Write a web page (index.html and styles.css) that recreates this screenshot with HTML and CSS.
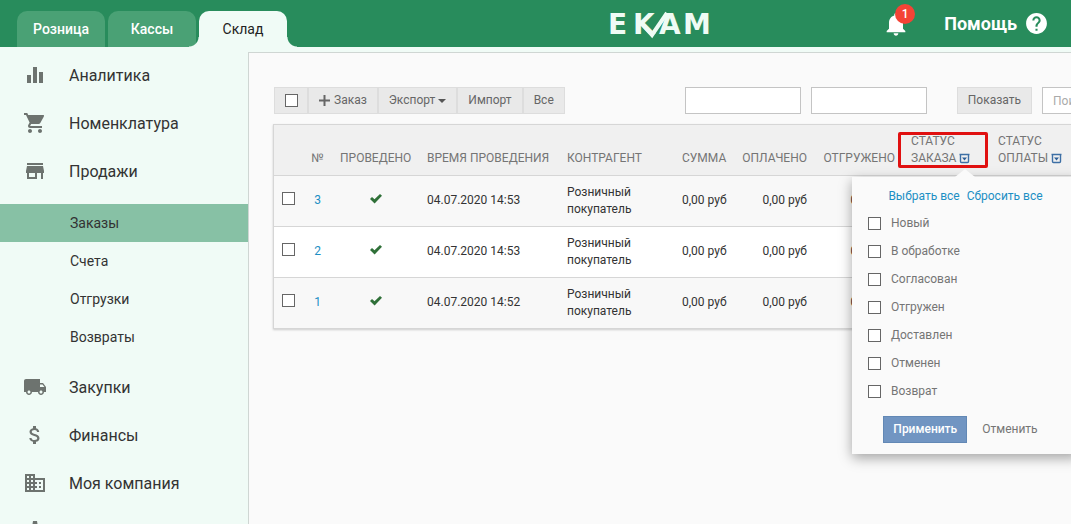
FILE: index.html
```html
<!DOCTYPE html>
<html lang="ru">
<head>
<meta charset="utf-8">
<meta name="viewport" content="width=device-width, initial-scale=1">
<title>ЕКАМ</title>
<link rel="stylesheet" href="styles.css">
</head>
<body>
<header class="topbar">
  <nav class="tabs">
    <a class="tab" href="#">Розница</a>
    <a class="tab" href="#">Кассы</a>
    <a class="tab tab-active" href="#">Склад</a>
  </nav>
  <svg class="logo" width="104" height="38" viewBox="0 0 104 38">
    <text class="logo-text" x="0 25 51 75" y="29">EKAM</text>
    <path d="M35 20 44 30 59 8" fill="none" stroke="#effbf5" stroke-width="4"/>
  </svg>
  <div class="topbar-right">
    <button class="bell" type="button" aria-label="1">
      <svg width="28" height="28" viewBox="0 0 24 24" fill="#fff"><path d="M12 22c1.1 0 2-.9 2-2h-4c0 1.1.89 2 2 2zm6-6v-5c0-3.07-1.64-5.64-4.5-6.32V4c0-.83-.67-1.5-1.5-1.5s-1.5.67-1.5 1.5v.68C7.63 5.36 6 7.92 6 11v5l-2 2v1h16v-1l-2-2z"/></svg>
      <span class="badge">1</span>
    </button>
    <a class="help" href="#">Помощь
      <svg width="25" height="25" viewBox="0 0 24 24" fill="#fff"><path d="M12 2C6.48 2 2 6.48 2 12s4.480 10 10 10 10-4.480 10-10S17.520 2 12 2zm1 17h-2v-2h2v2zm2.070-7.750l-.9.920C13.450 12.900 13 13.500 13 15h-2v-.5c0-1.100.450-2.100 1.170-2.830l1.240-1.260c.370-.360.590-.860.590-1.410 0-1.100-.9-2-2-2s-2 .9-2 2H8c0-2.210 1.790-4 4-4s4 1.790 4 4c0 .880-.360 1.680-.930 2.250z"/></svg>
    </a>
  </div>
</header>
<div class="body">
  <nav class="sidebar">
    <a class="item" href="#"><svg class="icon" viewBox="0 0 24 24"><path d="M4 12h4v8H4zM10 4h4v16h-4zM16 9h4v11h-4z"/></svg>Аналитика</a>
    <a class="item" href="#"><svg class="icon" viewBox="0 0 24 24"><path d="M7 18c-1.100 0-1.990.9-1.990 2S5.900 22 7 22s2-.9 2-2-.9-2-2-2zM1 2v2h2l3.600 7.590-1.350 2.450c-.160.280-.250.610-.250.960 0 1.100.9 2 2 2h12v-2H7.420c-.140 0-.250-.110-.250-.250l.030-.120.9-1.630h7.450c.750 0 1.410-.410 1.750-1.030l3.580-6.490A1 1 0 0 0 20 4H5.210l-.940-2H1zm16 16c-1.100 0-1.990.9-1.990 2s.890 2 1.990 2 2-.9 2-2-.9-2-2-2z"/></svg>Номенклатура</a>
    <a class="item" href="#"><svg class="icon" viewBox="0 0 24 24"><path d="M20 4H4v2h16V4zm1 10v-2l-1-5H4l-1 5v2h1v6h10v-6h4v6h2v-6h1zm-9 4H6v-4h6v4z"/></svg>Продажи</a>
    <div class="submenu">
      <a class="subitem subitem-active" href="#">Заказы</a>
      <a class="subitem" href="#">Счета</a>
      <a class="subitem" href="#">Отгрузки</a>
      <a class="subitem" href="#">Возвраты</a>
    </div>
    <a class="item" href="#"><svg class="icon" viewBox="0 0 24 24"><path d="M20 8h-3V4H3c-1.100 0-2 .9-2 2v11h2c0 1.660 1.340 3 3 3s3-1.340 3-3h6c0 1.660 1.340 3 3 3s3-1.340 3-3h2v-5l-3-4zM6 18.500c-.830 0-1.500-.670-1.500-1.500s.670-1.500 1.500-1.500 1.500.670 1.500 1.500-.670 1.500-1.500 1.500zm13.500-9l1.960 2.500H17V9.500h2.500zm-1.500 9c-.830 0-1.500-.670-1.500-1.500s.670-1.500 1.500-1.500 1.500.670 1.500 1.500-.670 1.500-1.500 1.500z"/></svg>Закупки</a>
    <a class="item" href="#"><svg class="icon" viewBox="0 0 24 24"><path d="M11.800 10.900c-2.270-.590-3-1.200-3-2.150 0-1.090 1.010-1.850 2.700-1.850 1.780 0 2.440.850 2.500 2.100h2.210c-.070-1.720-1.120-3.300-3.210-3.810V3h-3v2.160c-1.940.420-3.500 1.680-3.500 3.610 0 2.310 1.910 3.460 4.700 4.130 2.500.6 3 1.480 3 2.410 0 .690-.490 1.790-2.700 1.790-2.060 0-2.870-.920-2.980-2.100h-2.200c.120 2.190 1.760 3.420 3.680 3.830V21h3v-2.150c1.950-.370 3.500-1.500 3.500-3.550 0-2.840-2.430-3.810-4.700-4.400z"/></svg>Финансы</a>
    <a class="item" href="#"><svg class="icon" viewBox="0 0 24 24"><path d="M12 7V3H2v18h20V7H12zM6 19H4v-2h2v2zm0-4H4v-2h2v2zm0-4H4V9h2v2zm0-4H4V5h2v2zm4 12H8v-2h2v2zm0-4H8v-2h2v2zm0-4H8V9h2v2zm0-4H8V5h2v2zm10 12h-8v-2h2v-2h-2v-2h2v-2h-2V9h8v10zm-2-8h-2v2h2v-2zm0 4h-2v2h2v-2z"/></svg>Моя компания</a>
    <a class="item" href="#"><svg class="icon" viewBox="0 0 24 24"><path d="M10 2h4l.5 3 2 1 3-1 2 3.500-2.500 2v3l2.500 2-2 3.500-3-1-2 1-.5 3h-4l-.5-3-2-1-3 1-2-3.500 2.500-2v-3l-2.500-2 2-3.500 3 1 2-1zM12 8.500a3.500 3.500 0 1 0 0 7 3.500 3.500 0 0 0 0-7z"/></svg></a>
  </nav>
  <main class="main">
    <div class="toolbar">
      <div class="group">
        <label class="btn btn-check"><input class="check" type="checkbox" aria-label="Все"></label>
        <button class="btn" type="button"><svg class="plus" width="11" height="11" viewBox="0 0 11 11"><path d="M5.500 0v11M0 5.500h11" stroke="#666" stroke-width="2"/></svg>Заказ</button>
        <button class="btn" type="button">Экспорт<span class="caret"></span></button>
        <button class="btn" type="button">Импорт</button>
        <button class="btn" type="button">Все</button>
      </div>
      <div class="filters">
        <input class="field" type="text" aria-label="С">
        <input class="field" type="text" aria-label="По">
        <button class="btn btn-show" type="button">Показать</button>
        <input class="field field-search" type="text" placeholder="Поиск" aria-label="Поиск">
      </div>
    </div>
    <table class="orders">
      <colgroup>
        <col class="c-check"><col class="c-num"><col class="c-done"><col class="c-time"><col class="c-agent"><col class="c-sum"><col class="c-paid"><col class="c-shipped"><col class="c-status"><col>
      </colgroup>
      <thead>
        <tr>
          <th></th><th class="center">№</th><th class="center">ПРОВЕДЕНО</th><th>ВРЕМЯ ПРОВЕДЕНИЯ</th><th>КОНТРАГЕНТ</th>
          <th class="right">СУММА</th><th class="right">ОПЛАЧЕНО</th><th class="right">ОТГРУЖЕНО</th>
          <th class="status">СТАТУС<br>ЗАКАЗА <svg class="drop" width="11" height="11" viewBox="0 0 11 11"><path d="M1.500 2v6.500q0 1 1 1h6q1 0 1-1V2M.5 1.500h10" fill="none" stroke="#3d6fa5" stroke-width="1.400"/><path d="M3 4.500h5L5.500 7.500z" fill="#2c5f98"/></svg>
            <div class="highlight"></div>
            <form class="popup">
              <div class="popup-links"><a href="#">Выбрать все</a><a href="#">Сбросить все</a></div>
              <label class="option"><input class="check" type="checkbox">Новый</label>
              <label class="option"><input class="check" type="checkbox">В обработке</label>
              <label class="option"><input class="check" type="checkbox">Согласован</label>
              <label class="option"><input class="check" type="checkbox">Отгружен</label>
              <label class="option"><input class="check" type="checkbox">Доставлен</label>
              <label class="option"><input class="check" type="checkbox">Отменен</label>
              <label class="option"><input class="check" type="checkbox">Возврат</label>
              <div class="popup-actions"><button class="apply" type="button">Применить</button><button class="cancel" type="button">Отменить</button></div>
            </form>
          </th>
          <th>СТАТУС<br>ОПЛАТЫ <svg class="drop" width="11" height="11" viewBox="0 0 11 11"><path d="M1.500 2v6.500q0 1 1 1h6q1 0 1-1V2M.5 1.500h10" fill="none" stroke="#3d6fa5" stroke-width="1.400"/><path d="M3 4.500h5L5.500 7.500z" fill="#2c5f98"/></svg></th>
        </tr>
      </thead>
      <tbody>
        <tr>
          <td class="cell-check"><input class="check" type="checkbox" aria-label="3"></td><td class="center"><a href="#">3</a></td>
          <td class="center"><svg class="tick" width="12" height="10" viewBox="0 0 12 10"><path d="M0 5l2-2 2.500 2.200L10 0l2 1.800L4.600 9.600z"/></svg></td>
          <td>04.07.2020 14:53</td><td class="agent">Розничный покупатель</td><td class="right">0,00 руб</td><td class="right">0,00 руб</td><td class="right">0,00 руб</td><td></td><td></td>
        </tr>
        <tr>
          <td class="cell-check"><input class="check" type="checkbox" aria-label="2"></td><td class="center"><a href="#">2</a></td>
          <td class="center"><svg class="tick" width="12" height="10" viewBox="0 0 12 10"><path d="M0 5l2-2 2.500 2.200L10 0l2 1.800L4.600 9.600z"/></svg></td>
          <td>04.07.2020 14:53</td><td class="agent">Розничный покупатель</td><td class="right">0,00 руб</td><td class="right">0,00 руб</td><td class="right">0,00 руб</td><td></td><td></td>
        </tr>
        <tr>
          <td class="cell-check"><input class="check" type="checkbox" aria-label="1"></td><td class="center"><a href="#">1</a></td>
          <td class="center"><svg class="tick" width="12" height="10" viewBox="0 0 12 10"><path d="M0 5l2-2 2.500 2.200L10 0l2 1.800L4.600 9.600z"/></svg></td>
          <td>04.07.2020 14:52</td><td class="agent">Розничный покупатель</td><td class="right">0,00 руб</td><td class="right">0,00 руб</td><td class="right">0,00 руб</td><td></td><td></td>
        </tr>
      </tbody>
    </table>
  </main>
</div>
</body>
</html>
```

FILE: styles.css
```css
* { box-sizing: border-box; }
body {
  margin: 0;
  height: 100vh;
  overflow: hidden;
  display: flex;
  flex-direction: column;
  background: #f0fbf6;
  color: #333;
  font: 12px/17px Roboto, "Liberation Sans", sans-serif;
}
a { color: #1c8fc4; text-decoration: none; }
button, input { font: inherit; color: inherit; }

.topbar {
  flex: none;
  height: 47px;
  display: grid;
  grid-template-columns: 249px 1fr;
  align-items: center;
  background: #288c5c;
}
.tabs {
  grid-area: 1 / 1;
  align-self: end;
  display: flex;
  gap: 3px;
  padding-left: 17px;
}
.tab {
  flex: none;
  width: 88px;
  height: 36px;
  border-radius: 10px 10px 0 0;
  background: #4aa175;
  color: #fff;
  font-size: 14px;
  font-weight: 500;
  line-height: 36px;
  text-align: center;
}
.tab-active {
  position: relative;
  background: #f0fbf6;
  color: #222;
  font-weight: 400;
}
.tab-active::before, .tab-active::after {
  content: "";
  position: absolute;
  bottom: 0;
  width: 10px;
  height: 10px;
}
.tab-active::before { right: 100%; background: radial-gradient(circle at 0 0, transparent 9px, #f0fbf6 10px); }
.tab-active::after { left: 100%; background: radial-gradient(circle at 100% 0, transparent 9px, #f0fbf6 10px); }
.logo { grid-area: 1 / 2; justify-self: center; overflow: visible; }
.logo-text { font: bold 28px "DejaVu Sans", sans-serif; fill: #effbf5; }
.topbar-right {
  grid-area: 1 / 2;
  justify-self: end;
  display: flex;
  align-items: center;
  gap: 34px;
  padding-right: 22px;
}
.bell {
  position: relative;
  display: flex;
  padding: 0;
  border: 0;
  background: none;
}
.badge {
  position: absolute;
  top: -6px;
  right: -5px;
  width: 20px;
  height: 20px;
  border-radius: 50%;
  background: #f44336;
  color: #fff;
  font-size: 12px;
  font-weight: 500;
  line-height: 20px;
  text-align: center;
}
.help {
  display: flex;
  align-items: center;
  gap: 7px;
  color: #fff;
  font-size: 18px;
  font-weight: 700;
}

.body { flex: 1; min-height: 0; display: flex; padding-top: 5px; }
.sidebar { flex: none; width: 248px; }
.item {
  display: flex;
  align-items: center;
  gap: 22px;
  height: 48px;
  padding: 0 0 2px 23px;
  color: #333;
  font-size: 16px;
}
.icon { width: 24px; height: 24px; fill: #6d736f; }
.submenu { padding: 8px 0; }
.subitem {
  display: block;
  padding-left: 70px;
  color: #333;
  font-size: 14px;
  line-height: 38px;
}
.subitem-active { background: #87c1a5; }

.main {
  flex: 1;
  min-width: 0;
  overflow: hidden;
  padding: 34px 0 0 24px;
  border: solid #cfd6d3;
  border-width: 1px 0 0 1px;
  background: #fafafa;
}
.toolbar { display: flex; gap: 120px; padding-bottom: 10px; }
.group { flex: none; display: flex; padding-left: 1px; }
.btn {
  display: flex;
  align-items: center;
  height: 27px;
  padding: 0 10px;
  border: 1px solid #ddd;
  background: #e9e9e9;
  color: #666;
}
.btn-check { padding-right: 9px; }
.plus { margin-right: 4px; }
.caret {
  margin-left: 3px;
  border: 4px solid transparent;
  border-top-color: #555;
  border-bottom: 0;
}
.check {
  appearance: none;
  flex: none;
  display: block;
  width: 13px;
  height: 13px;
  margin: 0;
  border: 1px solid #666;
  background: #fff;
}
.filters { flex: 1; min-width: 0; display: flex; gap: 10px; }
.field {
  flex: none;
  width: 116px;
  height: 27px;
  padding: 0 10px;
  border: 1px solid #c4c4c4;
  background: #fff;
}
.field-search { width: 180px; }
.field::placeholder { color: #aaa; }
.btn-show { flex: none; margin-left: 20px; }

.orders {
  width: 100%;
  table-layout: fixed;
  border-collapse: separate;
  border-spacing: 0;
  border: solid #d6d6d6;
  border-width: 1px 0 0 1px;
  box-shadow: 0 1px 2px #ccc;
}
.c-check { width: 29px; }
.c-num { width: 29px; }
.c-done { width: 87px; }
.c-time { width: 140px; }
.c-agent { width: 115px; }
.c-sum { width: 60px; }
.c-paid { width: 81px; }
.c-shipped { width: 88px; }
.c-status { width: 87px; }
.orders th {
  padding: 8px;
  border-bottom: 1px solid #d6d6d6;
  background: #f0f0f0;
  color: #757575;
  font-weight: 400;
  text-align: left;
  vertical-align: bottom;
  white-space: nowrap;
}
.orders td { padding: 8px 8px 10px; border-bottom: 1px solid #d6d6d6; background: #f8f8f8; }
.orders .agent { padding-bottom: 8px; }
.orders .cell-check { padding-bottom: 14px; }
.orders tr:nth-child(even) td { background: #fff; }
.orders .center { text-align: center; }
.orders .right { text-align: right; white-space: nowrap; }
.tick { fill: #2f7038; }
.drop { vertical-align: -2px; }

.status { position: relative; }
.highlight {
  position: absolute;
  z-index: 2;
  inset: 7px 2px 7px -5px;
  border: 3px solid #e01010;
  border-radius: 2px;
}
.popup {
  position: absolute;
  z-index: 1;
  top: 52px;
  left: -51px;
  width: 227px;
  padding: 11px 16px 11px;
  background: #fafafa;
  box-shadow: 0 4px 12px rgba(0, 0, 0, .35);
}
.popup::before {
  content: "";
  position: absolute;
  bottom: 100%;
  left: 103px;
  border: 10px solid transparent;
  border-top: 0;
  border-bottom: 8px solid #fafafa;
}
.popup-links { display: flex; justify-content: center; gap: 7px; margin-bottom: 4px; }
.option {
  display: flex;
  align-items: center;
  gap: 10px;
  height: 28px;
}
.popup-actions { display: flex; justify-content: center; gap: 5px; margin-top: 11px; }
.apply, .cancel { height: 27px; padding: 0 9px; border: 1px solid #6288b5; }
.apply { background: #7195c2; color: #fff; font-weight: 500; }
.cancel { border-color: transparent; background: none; }
```
